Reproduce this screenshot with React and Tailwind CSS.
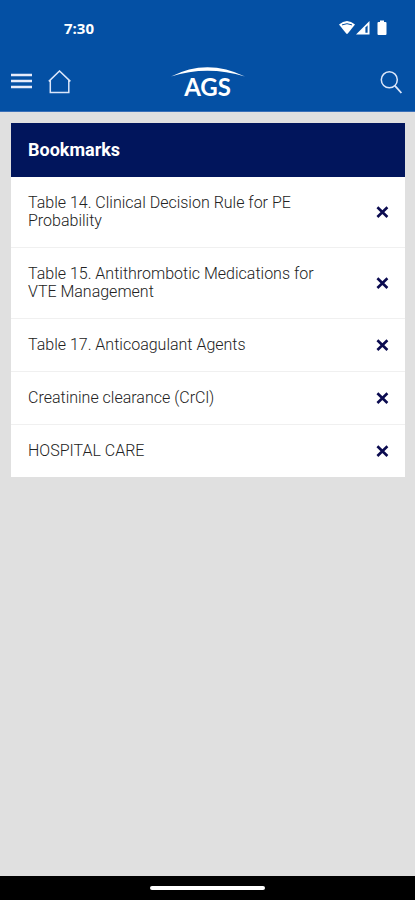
import { useState } from "react";

const INITIAL_BOOKMARKS = [
  "Table 14. Clinical Decision Rule for PE Probability",
  "Table 15. Antithrombotic Medications for VTE Management",
  "Table 17. Anticoagulant Agents",
  "Creatinine clearance (CrCl)",
  "HOSPITAL CARE",
];

function StatusBar() {
  return (
    <div className="flex h-14 items-center justify-between pr-7 pl-16 text-white">
      <span className="font-['Open_Sans',sans-serif] text-[15px] leading-5 font-bold">
        7:30
      </span>
      <div className="flex items-center gap-1">
        <svg width="36" height="16" viewBox="0 0 36 16" aria-hidden="true">
          {/* wifi */}
          <path
            d="M2 4.6 Q10 -2.4 18 4.6 L10.8 13.6 Q10 14.4 9.2 13.6 Z"
            fill="#fff"
          />
          <path
            d="M5 4.9 Q10 2.5 15 4.9"
            fill="none"
            stroke="#0450a4"
            strokeWidth="1"
          />
          {/* cell signal */}
          <path d="M19 14.5 L32.5 1 V14.5 Z" fill="#fff" />
          <path d="M28.4 7.4 L30.6 5.2 V12.8 H28.4 Z" fill="#0450a4" />
        </svg>
        <svg width="10" height="16" viewBox="0 0 10 16" aria-hidden="true">
          <path
            d="M3 0.5 H7 V2 H8.5 Q9.5 2 9.5 3 V14 Q9.5 15 8.5 15 H1.5 Q0.5 15 0.5 14 V3 Q0.5 2 1.5 2 H3 Z"
            fill="#fff"
          />
        </svg>
      </div>
    </div>
  );
}

function Logo() {
  return (
    <div className="flex flex-col items-center text-white">
      <svg width="74" height="10" viewBox="0 0 74 10" aria-hidden="true">
        <path d="M0 9.5 Q36 -9 74 9.5 Q36 -2 0 9.5 Z" fill="#fff" />
      </svg>
      <span className="font-[Lato,sans-serif] text-2xl leading-5 font-bold">
        AGS
      </span>
    </div>
  );
}

function Toolbar() {
  return (
    <div className="grid h-[55px] grid-cols-3 items-center px-[11px] pb-[3px]">
      <div className="flex items-center gap-4">
        <button type="button" aria-label="Menu">
          <svg width="21" height="24" viewBox="0 0 21 24" aria-hidden="true">
            <path
              d="M0 5 H21 M0 11 H21 M0 17 H21"
              stroke="#e6ebfa"
              strokeWidth="2.4"
            />
          </svg>
        </button>
        <button type="button" aria-label="Home">
          <svg width="24" height="24" viewBox="0 0 24 24" aria-hidden="true">
            <path
              d="M0.8 11.4 L11.5 1 L22.4 11.4 M2.3 10.2 V22.6 H20.8 V10.2"
              fill="none"
              stroke="#dbe6fa"
              strokeWidth="1.5"
            />
          </svg>
        </button>
      </div>
      <Logo />
      <button type="button" aria-label="Search" className="justify-self-end">
        <svg width="24" height="24" viewBox="0 0 24 24" aria-hidden="true">
          <circle
            cx="9.3"
            cy="9.8"
            r="8"
            fill="none"
            stroke="#dbe6fa"
            strokeWidth="1.5"
          />
          <path d="M14.8 15.6 L21.4 23" stroke="#dbe6fa" strokeWidth="1.8" />
        </svg>
      </button>
    </div>
  );
}

function BookmarkRow({ title, onRemove }) {
  return (
    <li className="flex items-center justify-between border-b border-[#f0f0f0] py-[17px] pr-4 pl-[17px] last:border-b-0">
      <a
        href="#"
        className="max-w-[300px] text-base leading-[18px] font-light text-[#222222]"
      >
        {title}
      </a>
      <button type="button" aria-label={`Remove ${title}`} onClick={onRemove}>
        <svg width="14" height="14" viewBox="0 0 14 14" aria-hidden="true">
          <path
            d="M2.4 2.2 L12.4 12 M12.4 2.2 L2.4 12"
            stroke="#0b0b50"
            strokeWidth="2.6"
          />
        </svg>
      </button>
    </li>
  );
}

export default function App() {
  const [bookmarks, setBookmarks] = useState(INITIAL_BOOKMARKS);

  return (
    <div className="flex min-h-screen flex-col bg-[#e0e0e0] font-[Roboto,sans-serif]">
      <header className="border-b border-[#3b70b8] bg-[#0450a4]">
        <StatusBar />
        <Toolbar />
      </header>

      <main className="flex-1 pt-[11px] pr-[10px] pl-[11px]">
        <section className="bg-white">
          <h1 className="bg-[#01155c] px-[17px] py-4 text-lg leading-[22px] font-bold text-white">
            Bookmarks
          </h1>
          <ul>
            {bookmarks.map((title) => (
              <BookmarkRow
                key={title}
                title={title}
                onRemove={() =>
                  setBookmarks((list) => list.filter((t) => t !== title))
                }
              />
            ))}
          </ul>
        </section>
      </main>

      {/* gesture navigation bar */}
      <footer className="flex h-6 items-center justify-center bg-black">
        <div className="h-1 w-[115px] rounded-full bg-white" />
      </footer>
    </div>
  );
}
